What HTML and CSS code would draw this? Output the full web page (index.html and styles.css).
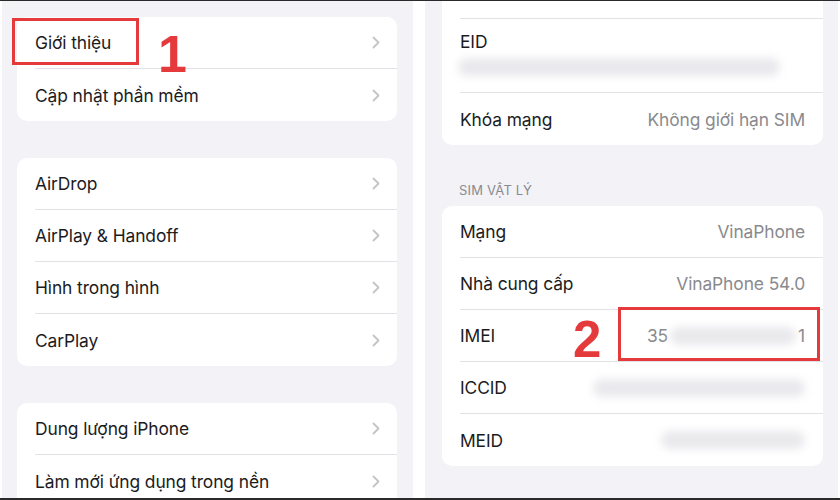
FILE: index.html
```html
<!DOCTYPE html>
<html lang="vi">
<head>
    <meta charset="UTF-8">
    <meta name="viewport" content="width=device-width, initial-scale=1.0">
    <title>Cài đặt chung</title>
    <link rel="stylesheet" href="styles.css">
</head>
<body>
    <div class="frame">
        <!-- Left screen: Cài đặt > Cài đặt chung -->
        <div class="screen screen-left">
            <div class="card">
                <div class="row">
                    <span class="label">Giới thiệu</span>
                    <svg class="chevron" width="8" height="13" viewBox="0 0 8 13"><polyline points="1.5,1.5 6.5,6.5 1.5,11.5" /></svg>
                </div>
                <div class="row">
                    <span class="label">Cập nhật phần mềm</span>
                    <svg class="chevron" width="8" height="13" viewBox="0 0 8 13"><polyline points="1.5,1.5 6.5,6.5 1.5,11.5" /></svg>
                </div>
            </div>

            <div class="card">
                <div class="row">
                    <span class="label">AirDrop</span>
                    <svg class="chevron" width="8" height="13" viewBox="0 0 8 13"><polyline points="1.5,1.5 6.5,6.5 1.5,11.5" /></svg>
                </div>
                <div class="row">
                    <span class="label">AirPlay &amp; Handoff</span>
                    <svg class="chevron" width="8" height="13" viewBox="0 0 8 13"><polyline points="1.5,1.5 6.5,6.5 1.5,11.5" /></svg>
                </div>
                <div class="row">
                    <span class="label">Hình trong hình</span>
                    <svg class="chevron" width="8" height="13" viewBox="0 0 8 13"><polyline points="1.5,1.5 6.5,6.5 1.5,11.5" /></svg>
                </div>
                <div class="row">
                    <span class="label">CarPlay</span>
                    <svg class="chevron" width="8" height="13" viewBox="0 0 8 13"><polyline points="1.5,1.5 6.5,6.5 1.5,11.5" /></svg>
                </div>
            </div>

            <div class="card">
                <div class="row">
                    <span class="label">Dung lượng iPhone</span>
                    <svg class="chevron" width="8" height="13" viewBox="0 0 8 13"><polyline points="1.5,1.5 6.5,6.5 1.5,11.5" /></svg>
                </div>
                <div class="row">
                    <span class="label">Làm mới ứng dụng trong nền</span>
                    <svg class="chevron" width="8" height="13" viewBox="0 0 8 13"><polyline points="1.5,1.5 6.5,6.5 1.5,11.5" /></svg>
                </div>
            </div>

            <div class="mark mark-one"></div>
            <span class="step step-one">1</span>
        </div>

        <div class="split"></div>

        <!-- Right screen: Giới thiệu -->
        <div class="screen screen-right">
            <div class="card card-scrolled">
                <div class="row"></div>
                <div class="row row-tall">
                    <span class="label">EID</span>
                    <span class="blur blur-eid"></span>
                </div>
                <div class="row">
                    <span class="label">Khóa mạng</span>
                    <span class="value">Không giới hạn SIM</span>
                </div>
            </div>

            <p class="section-title">SIM VẬT LÝ</p>
            <div class="card">
                <div class="row">
                    <span class="label">Mạng</span>
                    <span class="value">VinaPhone</span>
                </div>
                <div class="row">
                    <span class="label">Nhà cung cấp</span>
                    <span class="value">VinaPhone 54.0</span>
                </div>
                <div class="row">
                    <span class="label">IMEI</span>
                    <span class="value">35 <span class="blur blur-imei"></span> 1</span>
                </div>
                <div class="row">
                    <span class="label">ICCID</span>
                    <span class="blur blur-iccid"></span>
                </div>
                <div class="row">
                    <span class="label">MEID</span>
                    <span class="blur blur-meid"></span>
                </div>
            </div>

            <div class="mark mark-two"></div>
            <span class="step step-two">2</span>
        </div>
    </div>
</body>
</html>
```

FILE: styles.css
```css
body {
    margin: 0;
    font-family: 'Inter', 'Liberation Sans', sans-serif;
    background: #fff;
}

.frame {
    display: flex;
    width: 840px;
    height: 500px;
    overflow: hidden;
    border-top: 1px solid #2a2a2a;
    border-bottom: 2px solid #2a2a2a;
    box-sizing: border-box;
}

.screen {
    position: relative;
    background: #f2f2f7;
    overflow: hidden;
}

.screen-left {
    width: 411px;
    margin-left: 2px;
    padding: 16px 0 0 15px;
    box-sizing: border-box;
}

.split {
    width: 12px;
    background: #fff;
}

.screen-right {
    width: 413px;
    padding: 0 0 0 17px;
    box-sizing: border-box;
}

.card {
    width: 380px;
    background: #fff;
    border-radius: 10px;
    margin-bottom: 37px;
    overflow: hidden;
}

.card-scrolled {
    width: 381px;
    margin-top: -34px;
    margin-bottom: 0;
}

.row {
    display: flex;
    align-items: center;
    justify-content: space-between;
    height: 52px;
    margin-left: 18px;
    padding-right: 17px;
    border-bottom: 1px solid #e2e2e6;
    box-sizing: border-box;
}

.row:last-child {
    border-bottom: none;
}

.screen-right .card {
    width: 381px;
}

.screen-right .row {
    padding-right: 18px;
}

.row-tall {
    position: relative;
    height: 74px;
    align-items: flex-start;
    padding-top: 12px;
}

.label {
    font-size: 17.4px;
    color: #1c1c1e;
    letter-spacing: -0.1px;
}

.value {
    display: flex;
    align-items: center;
    font-size: 17.4px;
    color: #8a8a8e;
    letter-spacing: -0.1px;
}

.chevron polyline {
    fill: none;
    stroke: #c4c4c8;
    stroke-width: 1.8;
    stroke-linecap: round;
    stroke-linejoin: round;
}

.section-title {
    margin: 37px 0 8px 17px;
    font-size: 13px;
    color: #8a8a8e;
    letter-spacing: 0.2px;
}

/* blurred, hidden values */
.blur {
    display: inline-block;
    height: 18px;
    background: #e9e9ed;
    border-radius: 9px;
    filter: blur(4px);
}

.blur-eid {
    position: absolute;
    left: -2px;
    top: 39px;
    width: 322px;
}

.blur-imei {
    width: 126px;
    margin: 0 2px;
}

.blur-iccid {
    width: 212px;
}

.blur-meid {
    width: 144px;
}

/* red annotations */
.mark {
    position: absolute;
    border: 3px solid #e53a3c;
    box-sizing: border-box;
}

.mark-one {
    left: 10px;
    top: 17px;
    width: 127px;
    height: 47px;
}

.mark-two {
    left: 193px;
    top: 306px;
    width: 202px;
    height: 54px;
}

.step {
    position: absolute;
    font-family: 'Liberation Sans', sans-serif;
    font-weight: bold;
    color: #e53a3c;
    line-height: 1;
}

.step-one {
    left: 156px;
    top: 27px;
    font-size: 52px;
}

.step-two {
    left: 148px;
    top: 313px;
    font-size: 51px;
}
```
